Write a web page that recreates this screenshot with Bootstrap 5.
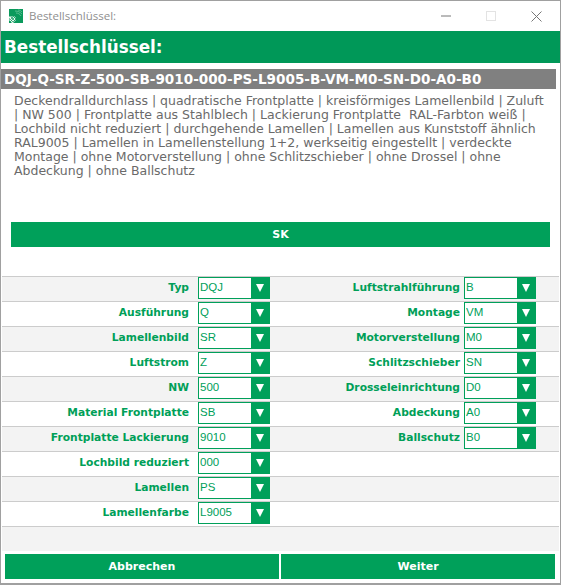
<!DOCTYPE html>
<html lang="de">
<head>
<meta charset="utf-8">
<title>Bestellschlüssel:</title>
<link rel="stylesheet" href="https://cdn.jsdelivr.net/npm/bootstrap@5.3.0/dist/css/bootstrap.min.css">
<style>
html,body{height:100%;margin:0}
body{font-family:"DejaVu Sans",Verdana,sans-serif;background:#fff;color:#666}
.win{width:561px;height:585px;border:solid #a0a0a0;border-width:1px 1px 2px 1px;background:#fff;overflow:hidden}
.tbar{height:30px;padding-left:8px;gap:6px}
.tbar-title{font-family:"Open Sans","Noto Sans",sans-serif;font-size:11.5px;color:#8f8f8f}
.tbtns{margin-left:auto;padding-right:18px;gap:35px}
.hd{height:32px;background:#009858;color:#fff;font-weight:700;font-size:16.8px;padding-left:3px;line-height:32px;white-space:nowrap}
.code{margin-top:6px;margin-right:4px;height:20px;background:#808080;color:#fff;font-weight:700;font-size:13.55px;line-height:20px;padding-left:3px;white-space:nowrap}
.desc{padding:5px 12px 0 13px;height:133px;font-size:12.5px;line-height:14px;color:#6a6a6a}
.sk{margin-left:10px;margin-right:10px;height:25px;background:#00a05a;color:#fff;font-size:11px;font-weight:700;line-height:25px;text-align:center}
.grid-area{margin-top:29px;margin-left:1px;margin-right:1px}
.frow{height:25px;border-top:1px solid #ccc}
.frow.alt{background:#f3f3f3}
.fcell{width:278px}
.flabel{width:187px;text-align:right;color:#009f58;font-size:10.7px;font-weight:700;white-space:nowrap;padding-bottom:2px}
.fcell+.fcell .flabel{width:180px}
.pick{width:72px;height:22px;margin-left:9px;margin-bottom:2px;border:1px solid #00a05a;background:#fff}
.fcell+.fcell .pick{margin-left:4px}
.pick select{appearance:none;-webkit-appearance:none;border:0;outline:0;background:#fff;width:53px;height:20px;padding:0 0 0 1px;color:#00a05a;font-family:"Liberation Sans",Arial,sans-serif;font-size:11.5px;border-radius:0}
.arrow{width:18px;background:#00a05a}
.fill{height:25px;background:#f3f3f3;border-top:1px solid #ccc}
.foot{margin-top:3px;margin-left:4px;gap:2px}
.fbtn{height:25px;width:274px;background:#00a05a;color:#fff;font-size:11px;font-weight:700;line-height:25px;text-align:center;border:0;padding:0;border-radius:0}
</style>
</head>
<body>
<div class="win">
  <div class="tbar d-flex align-items-center">
    <svg width="14" height="14" viewBox="0 0 14 14"><rect width="14" height="14" fill="#0a9a5c"/><path d="M6 2c3 0 5 1 7 3M7 4c2 0 4 1 5 3M9 1c2 0 3 1 4 2" stroke="#6cc49c" stroke-width=".8" fill="none"/><path d="M0 8l1-1 1 1 1-1 1 1 1-1 1 1 1 1-1 1 1 1-1 1-1 1-1 1H3l-1-1-1-1-1-1 1-1-1-1z" fill="#e8f6ef"/><path d="M2 8l5 5M4 7l3 3M1 10l3 3M6 8l-5 5M4 8l-2 2M7 10l-3 3" stroke="#0a9a5c" stroke-width=".7"/></svg>
    <span class="tbar-title">Bestellschlüssel:</span>
    <div class="tbtns d-flex align-items-center">
      <svg width="10" height="10" viewBox="0 0 10 10"><path d="M0 5h10" stroke="#777"/></svg>
      <svg width="10" height="10" viewBox="0 0 10 10"><rect x=".5" y=".5" width="9" height="9" fill="none" stroke="#e3e3e3"/></svg>
      <svg width="11" height="11" viewBox="0 0 11 11"><path d="M.5.5l10 10M10.5.5l-10 10" stroke="#777"/></svg>
    </div>
  </div>
  <div class="hd">Bestellschlüssel:</div>
  <div class="code">DQJ-Q-SR-Z-500-SB-9010-000-PS-L9005-B-VM-M0-SN-D0-A0-B0</div>
  <div class="desc">Deckendralldurchlass | quadratische Frontplatte | kreisförmiges Lamellenbild | Zuluft | NW 500 | Frontplatte aus Stahlblech | Lackierung Frontplatte &nbsp;RAL-Farbton weiß | Lochbild nicht reduziert | durchgehende Lamellen | Lamellen aus Kunststoff ähnlich RAL9005 | Lamellen in Lamellenstellung 1+2, werkseitig eingestellt | verdeckte Montage | ohne Motorverstellung | ohne Schlitzschieber | ohne Drossel | ohne Abdeckung | ohne Ballschutz</div>
  <div class="sk">SK</div>
  <div class="grid-area" id="g">
    <div class="frow alt d-flex align-items-center">
      <div class="fcell d-flex align-items-center"><span class="flabel">Typ</span><div class="pick d-flex"><select><option>DQJ</option></select><span class="arrow d-flex align-items-center justify-content-center"><svg width="10" height="10" viewBox="0 0 10 10"><path d="M1 1h8l-4 8z" fill="#fff"/></svg></span></div></div>
      <div class="fcell d-flex align-items-center"><span class="flabel">Luftstrahlführung</span><div class="pick d-flex"><select><option>B</option></select><span class="arrow d-flex align-items-center justify-content-center"><svg width="10" height="10" viewBox="0 0 10 10"><path d="M1 1h8l-4 8z" fill="#fff"/></svg></span></div></div>
    </div>
    <div class="frow d-flex align-items-center">
      <div class="fcell d-flex align-items-center"><span class="flabel">Ausführung</span><div class="pick d-flex"><select><option>Q</option></select><span class="arrow d-flex align-items-center justify-content-center"><svg width="10" height="10" viewBox="0 0 10 10"><path d="M1 1h8l-4 8z" fill="#fff"/></svg></span></div></div>
      <div class="fcell d-flex align-items-center"><span class="flabel">Montage</span><div class="pick d-flex"><select><option>VM</option></select><span class="arrow d-flex align-items-center justify-content-center"><svg width="10" height="10" viewBox="0 0 10 10"><path d="M1 1h8l-4 8z" fill="#fff"/></svg></span></div></div>
    </div>
    <div class="frow alt d-flex align-items-center">
      <div class="fcell d-flex align-items-center"><span class="flabel">Lamellenbild</span><div class="pick d-flex"><select><option>SR</option></select><span class="arrow d-flex align-items-center justify-content-center"><svg width="10" height="10" viewBox="0 0 10 10"><path d="M1 1h8l-4 8z" fill="#fff"/></svg></span></div></div>
      <div class="fcell d-flex align-items-center"><span class="flabel">Motorverstellung</span><div class="pick d-flex"><select><option>M0</option></select><span class="arrow d-flex align-items-center justify-content-center"><svg width="10" height="10" viewBox="0 0 10 10"><path d="M1 1h8l-4 8z" fill="#fff"/></svg></span></div></div>
    </div>
    <div class="frow d-flex align-items-center">
      <div class="fcell d-flex align-items-center"><span class="flabel">Luftstrom</span><div class="pick d-flex"><select><option>Z</option></select><span class="arrow d-flex align-items-center justify-content-center"><svg width="10" height="10" viewBox="0 0 10 10"><path d="M1 1h8l-4 8z" fill="#fff"/></svg></span></div></div>
      <div class="fcell d-flex align-items-center"><span class="flabel">Schlitzschieber</span><div class="pick d-flex"><select><option>SN</option></select><span class="arrow d-flex align-items-center justify-content-center"><svg width="10" height="10" viewBox="0 0 10 10"><path d="M1 1h8l-4 8z" fill="#fff"/></svg></span></div></div>
    </div>
    <div class="frow alt d-flex align-items-center">
      <div class="fcell d-flex align-items-center"><span class="flabel">NW</span><div class="pick d-flex"><select><option>500</option></select><span class="arrow d-flex align-items-center justify-content-center"><svg width="10" height="10" viewBox="0 0 10 10"><path d="M1 1h8l-4 8z" fill="#fff"/></svg></span></div></div>
      <div class="fcell d-flex align-items-center"><span class="flabel">Drosseleinrichtung</span><div class="pick d-flex"><select><option>D0</option></select><span class="arrow d-flex align-items-center justify-content-center"><svg width="10" height="10" viewBox="0 0 10 10"><path d="M1 1h8l-4 8z" fill="#fff"/></svg></span></div></div>
    </div>
    <div class="frow d-flex align-items-center">
      <div class="fcell d-flex align-items-center"><span class="flabel">Material Frontplatte</span><div class="pick d-flex"><select><option>SB</option></select><span class="arrow d-flex align-items-center justify-content-center"><svg width="10" height="10" viewBox="0 0 10 10"><path d="M1 1h8l-4 8z" fill="#fff"/></svg></span></div></div>
      <div class="fcell d-flex align-items-center"><span class="flabel">Abdeckung</span><div class="pick d-flex"><select><option>A0</option></select><span class="arrow d-flex align-items-center justify-content-center"><svg width="10" height="10" viewBox="0 0 10 10"><path d="M1 1h8l-4 8z" fill="#fff"/></svg></span></div></div>
    </div>
    <div class="frow alt d-flex align-items-center">
      <div class="fcell d-flex align-items-center"><span class="flabel">Frontplatte Lackierung</span><div class="pick d-flex"><select><option>9010</option></select><span class="arrow d-flex align-items-center justify-content-center"><svg width="10" height="10" viewBox="0 0 10 10"><path d="M1 1h8l-4 8z" fill="#fff"/></svg></span></div></div>
      <div class="fcell d-flex align-items-center"><span class="flabel">Ballschutz</span><div class="pick d-flex"><select><option>B0</option></select><span class="arrow d-flex align-items-center justify-content-center"><svg width="10" height="10" viewBox="0 0 10 10"><path d="M1 1h8l-4 8z" fill="#fff"/></svg></span></div></div>
    </div>
    <div class="frow d-flex align-items-center">
      <div class="fcell d-flex align-items-center"><span class="flabel">Lochbild reduziert</span><div class="pick d-flex"><select><option>000</option></select><span class="arrow d-flex align-items-center justify-content-center"><svg width="10" height="10" viewBox="0 0 10 10"><path d="M1 1h8l-4 8z" fill="#fff"/></svg></span></div></div>
    </div>
    <div class="frow alt d-flex align-items-center">
      <div class="fcell d-flex align-items-center"><span class="flabel">Lamellen</span><div class="pick d-flex"><select><option>PS</option></select><span class="arrow d-flex align-items-center justify-content-center"><svg width="10" height="10" viewBox="0 0 10 10"><path d="M1 1h8l-4 8z" fill="#fff"/></svg></span></div></div>
    </div>
    <div class="frow d-flex align-items-center">
      <div class="fcell d-flex align-items-center"><span class="flabel">Lamellenfarbe</span><div class="pick d-flex"><select><option>L9005</option></select><span class="arrow d-flex align-items-center justify-content-center"><svg width="10" height="10" viewBox="0 0 10 10"><path d="M1 1h8l-4 8z" fill="#fff"/></svg></span></div></div>
    </div>
    <div class="fill"></div>
  </div>
  <div class="foot d-flex">
    <button class="fbtn" type="button">Abbrechen</button>
    <button class="fbtn" type="button">Weiter</button>
  </div>
</div>
<script src="https://cdn.jsdelivr.net/npm/bootstrap@5.3.0/dist/js/bootstrap.bundle.min.js"></script>
</body>
</html>
